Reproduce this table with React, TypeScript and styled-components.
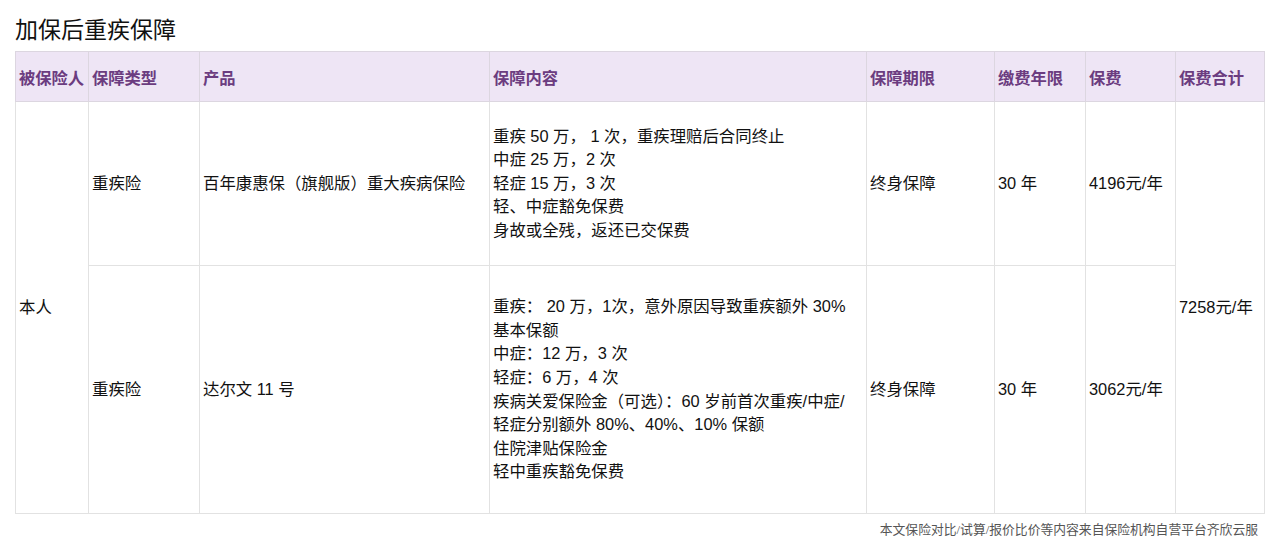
import React from "react";
import styled, { createGlobalStyle } from "styled-components";

const GlobalStyle = createGlobalStyle`
  body {
    margin: 0;
    background: #fff;
    font-family: "Liberation Sans", "Noto Sans CJK SC", sans-serif;
    color: #111;
  }
`;

const Page = styled.div`
  padding: 16px 16px 0 15px;
  width: 1280px;
  box-sizing: border-box;
`;

const Title = styled.h2`
  margin: 0 0 7px 0;
  font-size: 23px;
  font-weight: 400;
  line-height: 28px;
  color: #111;
`;

const Table = styled.table`
  width: 1249px;
  table-layout: fixed;
  border-collapse: collapse;
  border: 1px solid #dedede;
`;

const Col = styled.col<{ w: number }>`
  width: ${({ w }) => w}px;
`;

const Th = styled.th`
  height: 49px;
  background: #eee5f5;
  color: #6b3c80;
  font-size: 16.3px;
  font-weight: 700;
  text-align: left;
  padding: 0 3px;
  border: 1px solid #dcd6e0;
  white-space: nowrap;
  overflow: hidden;
`;

const Tr = styled.tr<{ h: number }>`
  height: ${({ h }) => h}px;
`;

const Td = styled.td`
  font-size: 16.4px;
  line-height: 23.6px;
  padding: 0 3px;
  border: 1px solid #e2e2e2;
  vertical-align: middle;
  color: #111;
`;

const Lines = styled.div`
  display: flex;
  flex-direction: column;
  white-space: nowrap;
`;

const Note = styled.div`
  width: 1243px;
  text-align: right;
  font-family: "Liberation Serif", "Noto Sans CJK SC", serif;
  font-size: 12.8px;
  color: #555;
  margin-top: 5px;
`;

const columns: [string, number][] = [
  ["被保险人", 73],
  ["保障类型", 111],
  ["产品", 290],
  ["保障内容", 377],
  ["保障期限", 128],
  ["缴费年限", 91],
  ["保费", 90],
  ["保费合计", 89],
];

const rows = [
  {
    h: 164,
    type: "重疾险",
    product: "百年康惠保（旗舰版）重大疾病保险",
    content: [
      "重疾 50 万， 1 次，重疾理赔后合同终止",
      "中症 25 万，2 次",
      "轻症 15 万，3 次",
      "轻、中症豁免保费",
      "身故或全残，返还已交保费",
    ],
    term: "终身保障",
    years: "30 年",
    fee: "4196元/年",
  },
  {
    h: 248,
    type: "重疾险",
    product: "达尔文 11 号",
    content: [
      "重疾： 20 万，1次，意外原因导致重疾额外 30%",
      "基本保额",
      "中症：12 万，3 次",
      "轻症：6 万，4 次",
      "疾病关爱保险金（可选）：60 岁前首次重疾/中症/",
      "轻症分别额外 80%、40%、10% 保额",
      "住院津贴保险金",
      "轻中重疾豁免保费",
    ],
    term: "终身保障",
    years: "30 年",
    fee: "3062元/年",
  },
];

export default function App() {
  return (
    <Page>
      <GlobalStyle />
      <Title>加保后重疾保障</Title>
      <Table>
        <colgroup>
          {columns.map(([label, w]) => (
            <Col key={label} w={w} />
          ))}
        </colgroup>
        <thead>
          <tr>
            {columns.map(([label]) => (
              <Th key={label}>{label}</Th>
            ))}
          </tr>
        </thead>
        <tbody>
          {rows.map((r, i) => (
            <Tr key={i} h={r.h}>
              {i === 0 && <Td rowSpan={rows.length}>本人</Td>}
              <Td>{r.type}</Td>
              <Td>{r.product}</Td>
              <Td>
                <Lines>
                  {r.content.map((line) => (
                    <span key={line}>{line}</span>
                  ))}
                </Lines>
              </Td>
              <Td>{r.term}</Td>
              <Td>{r.years}</Td>
              <Td>{r.fee}</Td>
              {i === 0 && <Td rowSpan={rows.length}>7258元/年</Td>}
            </Tr>
          ))}
        </tbody>
      </Table>
      <Note>本文保险对比/试算/报价比价等内容来自保险机构自营平台齐欣云服</Note>
    </Page>
  );
}
